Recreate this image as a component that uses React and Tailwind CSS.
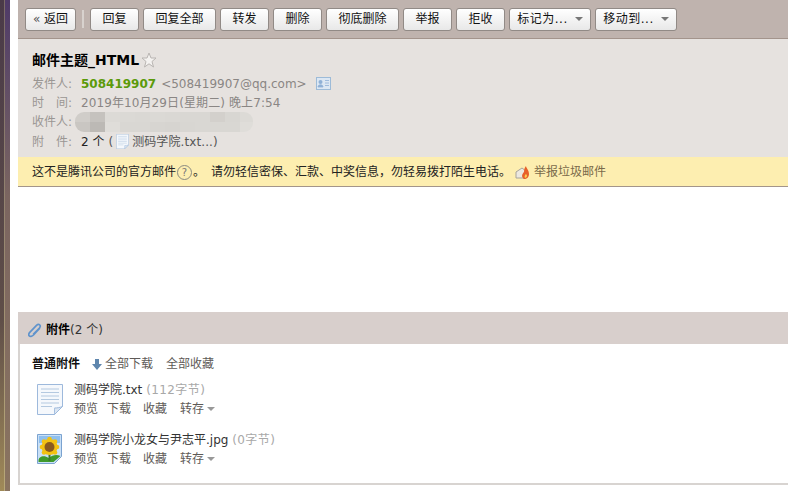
import React from 'react';

const fontStack = "font-['DejaVu_Sans','Noto_Sans_CJK_SC',sans-serif]";

const mosaicTop = ['#d0cdc9', '#c5c2be', '#dcdad6', '#dbd9d5', '#dad8d4', '#dbd9d5', '#dad8d4', '#d9d7d3', '#d9d7d3', '#d3d0cc', '#d8d6d2', '#dcdad6'];
const mosaicBottom = ['#c9c6c2', '#bcb9b5', '#dfddd9', '#d9d7d3', '#d9d7d3', '#d7d5d1', '#d6d4d0', '#d8d6d2', '#d9d7d3', '#d9d7d3', '#d9d7d3', '#dfddd9'];

const Btn = ({ children, w, caret }) => (
  <button className={`${w} h-[23px] shrink-0 flex items-center justify-center gap-[7px] rounded-[3px] border border-[#918a86] bg-gradient-to-b from-white to-[#e8e8e8] text-[12px] text-[#111]`}>
    <span>{children}</span>
    {caret && <span className="w-0 h-0 border-x-[4px] border-x-transparent border-t-[4px] border-t-[#777]"></span>}
  </button>
);

const Caret = () => (
  <span className="inline-block w-0 h-0 ml-[3px] mb-[1px] border-x-[4px] border-x-transparent border-t-[4px] border-t-[#999]"></span>
);

const DocIcon = ({ className }) => (
  <svg className={className} viewBox="0 0 26 31">
    <path d="M.5.5h25v22l-8 8H.5z" fill="#f5f8fc" stroke="#9db9dc" />
    <path d="M17.500 30.500c0-3 0-6.500 0-6.500 3 0 5.500-.5 8-1.500z" fill="#dbe6f3" stroke="#9db9dc" />
    <path d="M4 5h18M4 8.500h18M4 12h18M4 15.500h18M4 19h18M4 22.500h11" stroke="#b4c9e0" />
  </svg>
);

const ImageIcon = () => (
  <svg className="w-[25px] h-[30px]" viewBox="0 0 25 30">
    <path d="M.5.5h24v22l-7 7H.5z" fill="#c9e0f7" stroke="#7ba3d0" />
    <path d="M2 2h21v7H2z" fill="#8fc0ef" />
    <path d="M1.500 27c0-5 6-6 10-3 4-3 8-4 12-2l-7 6H1.500z" fill="#3f9a2c" />
    <path d="M11.500 20h2v7h-2z" fill="#3f7a2c" />
    <g fill="#f3c212">
      <circle cx="12.500" cy="13" r="8" />
      <circle cx="5" cy="13" r="2.300" />
      <circle cx="20" cy="13" r="2.300" />
      <circle cx="12.500" cy="5" r="2.300" />
      <circle cx="7" cy="7.500" r="2.300" />
      <circle cx="18" cy="7.500" r="2.300" />
      <circle cx="7" cy="18.500" r="2.300" />
      <circle cx="18" cy="18.500" r="2.300" />
    </g>
    <circle cx="12.500" cy="13" r="5" fill="#8a5a1e" />
  </svg>
);

const Label = ({ children }) => <span className="w-[49px] shrink-0 text-[#9a9693]">{children}</span>;

const FileRow = ({ name, size, icon }) => (
  <div className="flex gap-[11px] h-[50px]">
    <div className="w-[26px] pt-[5px] shrink-0">{icon}</div>
    <div className="pt-[2px]">
      <div className="h-[19px] leading-[19px]">
        <span className="text-[#333]">{name}</span> <span className="text-[#a8a8a8] tracking-[0.4px]">({size})</span>
      </div>
      <div className="flex h-[19px] leading-[19px] text-[#5e5a57]">
        <span className="w-[33px]">预览</span>
        <span className="w-[36px]">下载</span>
        <span className="w-[37px]">收藏</span>
        <span className="flex items-center">转存<Caret /></span>
      </div>
    </div>
  </div>
);

export default function App() {
  return (
    <div className={`${fontStack} w-[788px] h-[491px] overflow-hidden flex bg-white text-[12px]`}>
      <div className="w-[4px] shrink-0 bg-gradient-to-b from-[#4a3a48] via-[#5f4e48] via-65% to-[#a08a58]"></div>
      <div className="w-[1px] shrink-0 bg-gradient-to-b from-[#7a6a68] to-[#b8a878]"></div>
      <div className="w-[5px] shrink-0 bg-gradient-to-b from-[#4f3a68] via-[#7b6560] via-40% to-[#8a7460]"></div>
      <div className="w-[8px] shrink-0 bg-white"></div>

      <div className="flex-1 min-w-0 flex flex-col">
        <div className="h-[39px] shrink-0 flex items-center pl-[7px] gap-[4px] bg-[#bfb3ae] border-b border-[#a3948c]">
          <Btn w="w-[51px]"><span className="text-[#555]">«</span> 返回</Btn>
          <div className="w-[2px] h-[18px] mx-[2px] bg-[#d8d2ce]"></div>
          <Btn w="w-[49px]">回复</Btn>
          <Btn w="w-[73px]">回复全部</Btn>
          <Btn w="w-[49px]">转发</Btn>
          <Btn w="w-[49px]">删除</Btn>
          <Btn w="w-[73px]">彻底删除</Btn>
          <Btn w="w-[49px]">举报</Btn>
          <Btn w="w-[49px]">拒收</Btn>
          <Btn w="w-[82px]" caret><span className="tracking-[0.5px]">标记为...</span></Btn>
          <Btn w="w-[82px]" caret><span className="tracking-[0.5px]">移动到...</span></Btn>
        </div>

        <div className="h-[118px] shrink-0 bg-[#e6e2df] pl-[14px] pt-[11px]">
          <div className="flex items-center h-[20px] text-[14px] font-bold text-black">
            邮件主题_HTML
            <svg className="w-[16px] h-[16px] ml-[2px]" viewBox="0 0 16 16">
              <path d="M8 1l2 5h5l-4 3.500L12.500 15 8 11.800 3.500 15 5 9.500 1 6h5z" fill="#f4f2f0" stroke="#b9b5b2" />
            </svg>
          </div>
          <div className="flex items-center h-[19px] mt-[4px]">
            <Label>发件人:</Label>
            <span className="font-bold text-[#5b9a0a]">508419907</span>
            <span className="ml-[5px] text-[#8a8684]">&lt;508419907@qq.com&gt;</span>
            <svg className="w-[15px] h-[13px] ml-[9px]" viewBox="0 0 15 13">
              <rect x=".5" y=".5" width="14" height="12" fill="#dce7f3" stroke="#9dbbd8" />
              <circle cx="4.500" cy="5" r="2" fill="#8fb0d6" />
              <path d="M2 10c0-3 5-3 5 0zM9 3.500h4M9 6h4M9 8.500h4" fill="#8fb0d6" stroke="#8fb0d6" strokeWidth=".8" />
            </svg>
          </div>
          <div className="flex items-center h-[19px]">
            <Label>时　间:</Label>
            <span className="text-[#8a8684] tracking-[0.1px]">2019年10月29日(星期二) 晚上7:54</span>
          </div>
          <div className="flex items-center h-[20px]">
            <Label>收件人:</Label>
            <div className="w-[178px] h-[20px] -ml-[6px] rounded-[9px] overflow-hidden flex flex-col">
              {[mosaicTop, mosaicBottom].map((row, i) => (
                <div key={i} className="flex h-[10px]">
                  {row.map((color, j) => (
                    <span key={j} className="w-[15px] shrink-0" style={{ backgroundColor: color }}></span>
                  ))}
                </div>
              ))}
            </div>
          </div>
          <div className="flex items-center h-[19px]">
            <Label>附　件:</Label>
            <span className="text-[#222]">2 个</span>
            <span className="ml-[4px] text-[#555]">(</span>
            <DocIcon className="w-[13px] h-[15px] mx-[3px]" />
            <span className="text-[#555] tracking-[0.1px]">测码学院.txt...)</span>
          </div>
        </div>

        <div className="h-[30px] shrink-0 flex items-center pl-[14px] pt-[1px] bg-[#fdeeb0] border-b border-[#a3958a] text-[#222]">
          <span>这不是腾讯公司的官方邮件</span>
          <span className="w-[15px] h-[15px] mx-[1px] flex items-center justify-center rounded-full border border-[#8a8a80] text-[10px] text-[#777]">?</span>
          <span>。</span>
          <span className="ml-[6px]">请勿轻信密保、汇款、中奖信息，勿轻易拨打陌生电话。</span>
          <svg className="w-[15px] h-[16px] ml-[4px]" viewBox="0 0 15 16">
            <path d="M1 8l6-4 4 3v7H1z" fill="#ece8e0" stroke="#a8a49c" />
            <path d="M9 15c-3-2-2-5 0-7 0-3 1-5 2-6 0 2 3 4 3 8 0 3-2 5-5 5z" fill="#e8602a" />
            <path d="M10 14c-1-2 0-3 1-4 1 1 2 3-1 4z" fill="#f8cf50" />
          </svg>
          <span className="ml-[4px] text-[#7a6a4a]">举报垃圾邮件</span>
        </div>

        <div className="h-[125px] shrink-0 bg-white"></div>

        <div className="h-[173px] shrink-0 border-l-2 border-b-2 border-[#d8d4d1]">
          <div className="h-[32px] -ml-[2px] flex items-center pl-[10px] pt-[4px] bg-[#d8cfcc]">
            <svg className="w-[14px] h-[15px] mr-[4px]" viewBox="0 0 14 15" fill="none">
              <path d="M12 5L5.500 12c-1.500 1.600-3.600 1.700-4.300.8C.4 12 .8 10.500 2 9.200L8.500 2.400c1-1 2.500-1.200 3.300-.4.800.8.500 2.100-.4 3L5.200 11.300" stroke="#5f93cc" strokeWidth="1.700" />
            </svg>
            <span className="font-bold text-black">附件</span>
            <span className="text-[#333]">(2 个)</span>
          </div>
          <div className="pl-[12px] pt-[10px]">
            <div className="flex items-center h-[20px]">
              <span className="font-bold text-[#111]">普通附件</span>
              <svg className="w-[10px] h-[11px] ml-[12px] mr-[3px]" viewBox="0 0 10 11">
                <path d="M3 0h4v5h3l-5 6-5-6h3z" fill="#5f86ad" />
              </svg>
              <span className="text-[#5e5a57]">全部下载</span>
              <span className="ml-[13px] text-[#5e5a57]">全部收藏</span>
            </div>
            <div className="mt-[5px] pl-[5px]">
              <FileRow name="测码学院.txt" size="112字节" icon={<DocIcon className="w-[26px] h-[31px]" />} />
              <FileRow name="测码学院小龙女与尹志平.jpg" size="0字节" icon={<ImageIcon />} />
            </div>
          </div>
        </div>
      </div>
    </div>
  );
}
